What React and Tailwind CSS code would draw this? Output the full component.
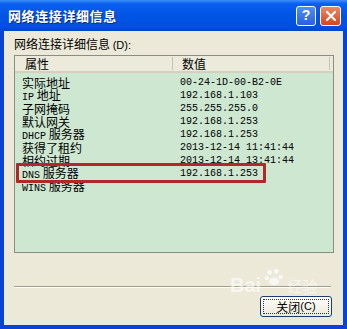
import React from 'react';

const rows = [
  { name: <>实际地址</>, value: '00-24-1D-00-B2-0E' },
  { name: <><span className="font-['Liberation_Mono'] text-[10px]">IP</span> 地址</>, value: '192.168.1.103' },
  { name: <>子网掩码</>, value: '255.255.255.0' },
  { name: <>默认网关</>, value: '192.168.1.253' },
  { name: <><span className="font-['Liberation_Mono'] text-[10px]">DHCP</span> 服务器</>, value: '192.168.1.253' },
  { name: <>获得了租约</>, value: '2013-12-14 11:41:44' },
  { name: <>相约过期</>, value: '2013-12-14 13:41:44' },
  { name: <><span className="font-['Liberation_Mono'] text-[10px]">DNS</span> 服务器</>, value: '192.168.1.253' },
  { name: <><span className="font-['Liberation_Mono'] text-[10px]">WINS</span> 服务器</>, value: '' },
];

export default function App() {
  return (
    <div className="w-[347px] h-[329px] flex flex-col bg-[#0842d6] font-['Noto_Sans_CJK_SC',sans-serif] overflow-hidden">
      {/* 标题栏 */}
      <div className="h-[31px] shrink-0 flex items-center pl-[8px] pr-[6px] bg-[linear-gradient(#3d8ff8_0%,#0a5fee_12%,#0055e5_50%,#0050e0_85%,#0046c8_100%)]">
        <span className="flex-1 text-white font-bold text-[13px] tracking-[0.6px] [text-shadow:1px_1px_0_#0a2a80]">网络连接详细信息</span>
        <div className="flex gap-[4px]">
          <div className="w-[20px] h-[20px] rounded-[3px] border border-white bg-[linear-gradient(#4f8ef8,#2561e0)] flex items-center justify-center text-white font-bold text-[14px] font-['Liberation_Sans',sans-serif]">?</div>
          <div className="w-[21px] h-[20px] rounded-[3px] border border-white bg-[linear-gradient(#e98a66,#d5461c)] flex items-center justify-center">
            <svg width="12" height="12" viewBox="0 0 12 12">
              <path d="M2 2 L10 10 M10 2 L2 10" stroke="white" strokeWidth="2.2" strokeLinecap="round" />
            </svg>
          </div>
        </div>
      </div>

      {/* 内容区 */}
      <div className="flex-1 mx-[4px] mb-[4px] bg-[#ece9d8] flex flex-col px-[10px] pt-[7px] relative">
        <div className="text-[12px] leading-[12px] text-black h-[12px]">网络连接详细信息 <span className="font-['Liberation_Sans'] text-[11px]">(D):</span></div>

        <div className="mt-[5px] w-[320px] h-[198px] border border-[#858f85] bg-[#cde7d0] relative">
          <div className="h-[17px] flex items-center bg-[#ebeadb] border-b-2 border-[#d4d0c0] text-[12px] text-black">
            <div className="w-[158px] pl-[10px] border-r border-[#c8c4b2] h-[13px] flex items-center">属性</div>
            <div className="flex-1 pl-[9px] border-r border-[#c8c4b2] h-[13px] flex items-center mr-[3px]">数值</div>
          </div>
          <div className="pt-[3px]">
            {rows.map((r, i) => (
              <div key={i} className="h-[13px] flex items-center text-[12px] leading-[13px] text-black">
                <div className="w-[158px] pl-[7px] whitespace-nowrap">{r.name}</div>
                <div className="pl-[7px] font-['Liberation_Mono',monospace] text-[10px] whitespace-nowrap">{r.value}</div>
              </div>
            ))}
          </div>
          {/* 红色标注框 */}
          <div className="absolute left-[1px] top-[107px] w-[250px] h-[20px] border-[3px] border-[#b0282c] rounded-[1px]" />
        </div>

        <div className="mt-[33px] w-[317px] border-t border-[#a09d88] border-b border-b-white" />

        <div className="flex justify-end mt-[8px] pr-[1px]">
          <div className="w-[72px] h-[21px] rounded-[3px] border border-[#1c3b74] bg-[linear-gradient(#ffffff,#ece9d8)] p-[2px]">
            <div className="w-full h-full border border-dotted border-[#333] flex items-center justify-center text-[12px] text-black">
              关闭<span className="font-['Liberation_Sans'] text-[11px]">(C)</span>
            </div>
          </div>
        </div>

        {/* 水印 */}
        <div className="absolute left-[226px] top-[244px] flex items-end gap-[3px] text-white/60 pointer-events-none">
          <span className="font-['Liberation_Sans'] font-bold text-[20px] leading-[20px]">Bai</span>
          <svg width="20" height="20" viewBox="0 0 18 18" className="opacity-70 -mt-[8px] self-start">
            <circle cx="5" cy="5" r="2.2" fill="white" />
            <circle cx="11" cy="4" r="2.2" fill="white" />
            <circle cx="2.5" cy="10" r="2" fill="white" />
            <circle cx="15" cy="9" r="2" fill="white" />
            <ellipse cx="9" cy="13" rx="4.5" ry="3.5" fill="white" />
          </svg>
          <span className="text-[15px] leading-[18px]">经验</span>
        </div>
      </div>
    </div>
  );
}
